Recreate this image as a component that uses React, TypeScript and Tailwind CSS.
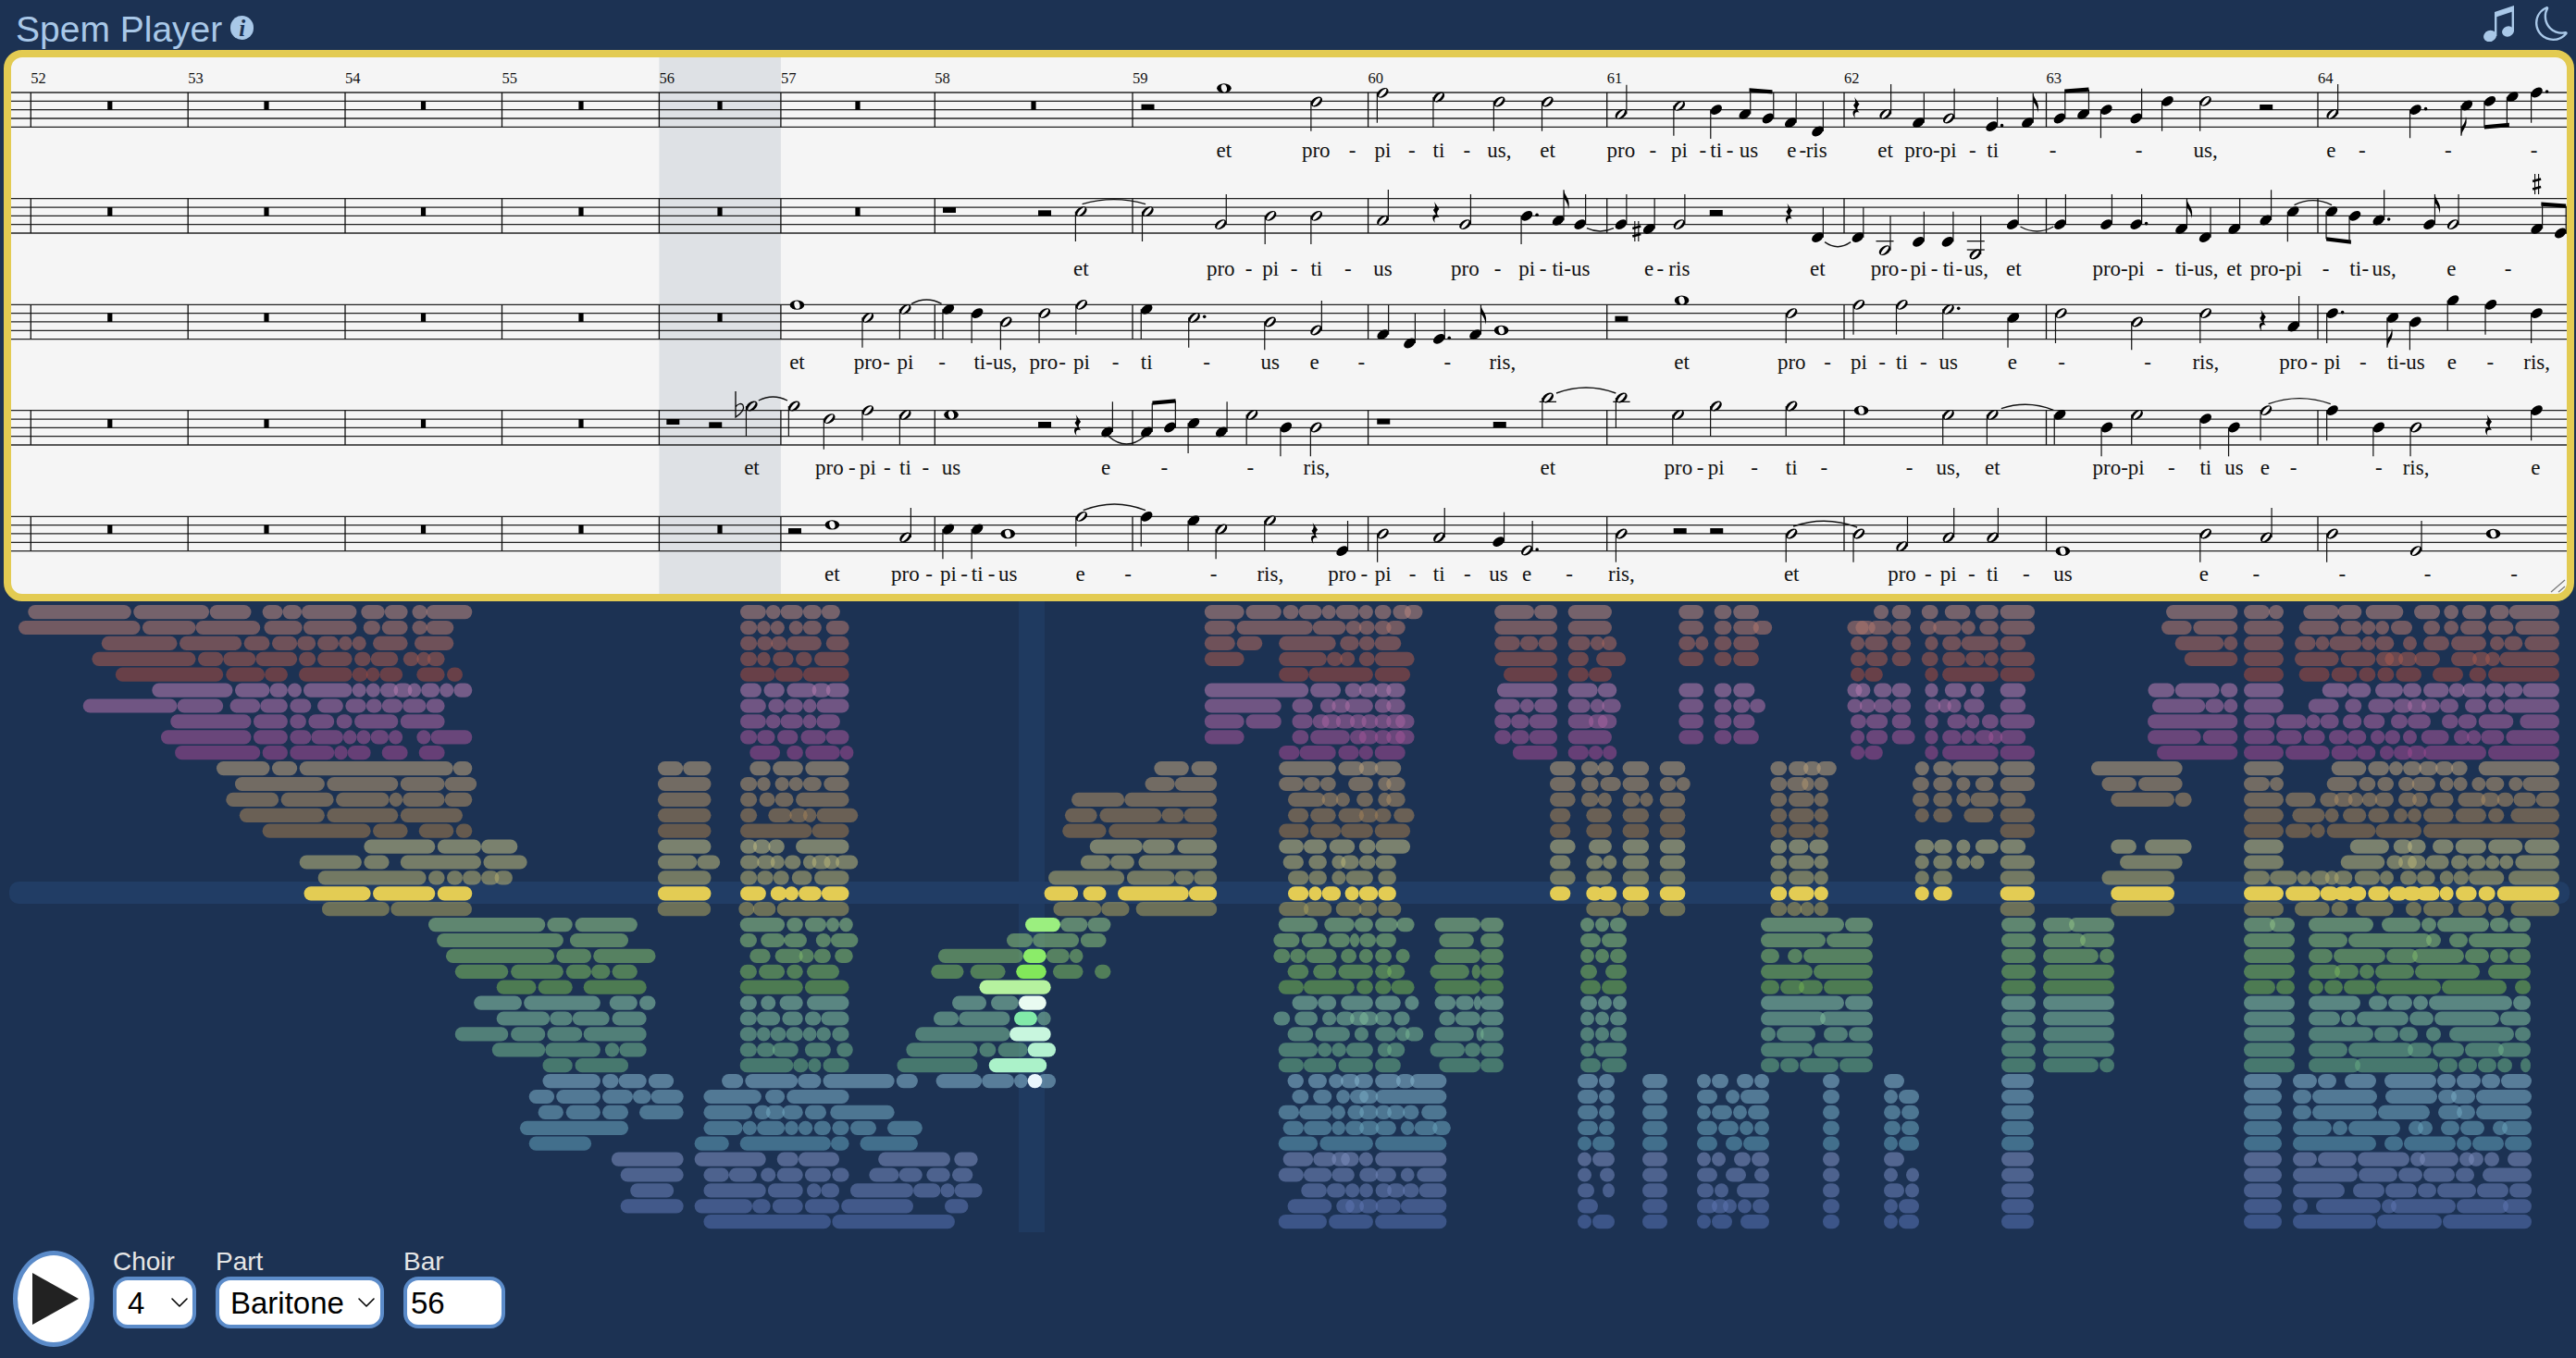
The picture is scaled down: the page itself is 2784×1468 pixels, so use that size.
import { BsMoon } from "react-icons/bs";
import { ChevronDown } from "lucide-react";

type View = { ox: number; oy: number; sx: number };
type Note = [number, number, string, number?];

// zoom-space helpers: the score was measured in a few stretched views
const top1: View = { ox: 900, oy: 50, sx: 1.6505 };
const top2: View = { ox: 1850, oy: 0, sx: 1.679 };
const low1: View = { ox: 840, oy: 315, sx: 1.633 };
const low2: View = { ox: 1800, oy: 315, sx: 1.593 };

const px = (v: View, x: number) => v.ox + x / v.sx;
const py = (v: View, y: number) => v.oy + y / 3;

const staffTops = [100, 214.7, 329.3, 443.7, 558.3];
const lineGap = 9.33;
const bars = [33.3, 203.2, 373, 542.5, 712.4, 843.9, 1010.3, 1224, 1478.6, 1736.7, 1993, 2211.5, 2505];
const barRests = [
  [118.8, 288, 457.5, 628, 778, 927, 1117],
  [118.8, 288, 457.5, 628, 778, 927],
  [118.8, 288, 457.5, 628, 778],
  [118.8, 288, 457.5, 628],
  [118.8, 288, 457.5, 628, 778],
];

const noteSets: { v: View; notes: Note[] }[] = [
  {
    v: top1,
    notes: [
      [698, 136, "w"], [863, 180, "h", 275], [981, 151, "h", 248], [1081, 165, "h", 262], [1189, 180, "h", 275], [1275, 180, "h", 275],
      [1406, 220, "h", 125], [1510, 193, "h", 290],
      [443, 536, "h", 633], [562, 536, "h", 633], [692, 578, "h", 480], [781, 550, "h", 642], [863, 550, "h", 642],
      [981, 565, "h", 465], [1128, 578, "h", 480], [1238, 550, "q.", 642], [1294, 565, "qf", 466], [1333, 578, "q", 480],
      [1406, 578, "q", 480], [1456, 592, "q", 494], [1510, 578, "h", 480],
    ],
  },
  {
    v: top2,
    notes: [
      [8, 356, "q", 450], [60, 370, "q", 295], [102, 384, "q", 300], [143, 398, "q", 302], [192, 426, "q", 330],
      [315, 370, "h", 273], [375, 398, "q", 302], [430, 384, "h", 287], [508, 410, "q.", 315], [573, 398, "qf", 302],
      [631, 384, "q", 297], [674, 370, "q", 290], [716, 356, "q", 448], [770, 384, "q", 287], [827, 328, "q", 425], [896, 328, "h", 425],
      [1126, 370, "h", 273], [1277, 356, "q.", 448], [1370, 342, "qf", 440], [1412, 328, "q", 415], [1453, 314, "q", 405], [1497, 300, "q.", 398],
      [192, 770, "q", 672], [265, 770, "q", 672], [314, 812, "h", 700], [375, 784, "q", 686], [428, 784, "q", 686], [478, 825, "h", 700],
      [546, 728, "q", 630], [632, 728, "q", 630], [716, 728, "q", 630], [770, 728, "q.", 630], [852, 742, "qf", 645], [895, 770, "q", 672],
      [948, 742, "q", 644], [1005, 714, "q", 616], [1055, 686, "q", 784], [1125, 686, "q", 775], [1167, 700, "q", 785],
      [1210, 714, "q.", 616], [1302, 728, "qf", 630], [1345, 728, "h", 630], [1497, 742, "q", 662], [1540, 756, "q", 668],
    ],
  },
  {
    v: low1,
    notes: [
      [35, 44, "w"], [160, 85, "h", 182], [226, 58, "h", 155], [302, 58, "q", 155], [353, 71, "q", 168], [404, 99, "h", 190], [472, 71, "h", 168], [537, 43, "h", 140],
      [652, 58, "q", 155], [736, 85, "h.", 182], [870, 99, "h", 190], [951, 126, "h", 30], [1069, 140, "q", 44], [1116, 168, "q", 71], [1168, 154, "q.", 57],
      [1232, 140, "qf", 44], [1278, 126, "w"],
      [-45, 372, "h", 470], [30, 372, "h", 470], [92, 413, "h", 512], [160, 386, "h", 484], [226, 400, "h", 497], [307, 400, "w"],
      [582, 456, "q", 358], [652, 456, "q", 362], [693, 441, "q", 355], [735, 427, "q", 525], [784, 456, "q", 358], [838, 400, "h", 497], [898, 441, "q", 535],
      [951, 441, "h", 535], [1360, 345, "h", 442], [1490, 345, "h", 442],
      [97, 757, "w"], [226, 798, "h", 702], [302, 771, "q", 868], [353, 771, "q", 868], [407, 786, "w"], [537, 730, "h", 827], [652, 730, "q", 827],
      [735, 743, "q", 840], [784, 771, "h", 868], [870, 743, "h", 840], [997, 842, "q", 744], [1069, 786, "h", 878], [1168, 798, "h", 702],
      [1273, 812, "q", 716], [1323, 840, "h.", 744], [1490, 786, "h", 878],
    ],
  },
  {
    v: low2,
    notes: [
      [28, 29, "w"], [217, 71, "h", 168], [333, 43, "h", 140], [407, 43, "h", 140], [487, 58, "h.", 155], [599, 85, "q", 182], [681, 71, "h", 168],
      [812, 99, "h", 190], [930, 71, "h", 168], [1081, 114, "q", 15], [1148, 71, "q.", 168], [1252, 85, "qf", 182], [1291, 99, "q", 190],
      [1356, 29, "q", 127], [1421, 43, "q", 140], [1500, 71, "q", 168],
      [22, 400, "h", 497], [87, 372, "h", 470], [217, 372, "h", 470], [337, 386, "w"], [487, 400, "h", 497], [563, 400, "h", 497], [679, 400, "q", 497],
      [760, 441, "q", 535], [812, 400, "h", 497], [930, 413, "q", 512], [979, 441, "q", 535], [1034, 386, "h", 484], [1148, 386, "q", 484],
      [1228, 441, "q", 535], [1292, 441, "h", 535], [1500, 386, "q", 484],
      [217, 786, "h", 878], [333, 786, "h", 878], [407, 827, "h", 730], [487, 798, "h", 702], [563, 798, "h", 702], [684, 842, "w"], [930, 786, "h", 878],
      [1034, 798, "h", 702], [1148, 786, "h", 878], [1292, 842, "h", 744], [1425, 786, "w"],
    ],
  },
];

// x, y of small block rests
const blockRests: { v: View; at: number[][] }[] = [
  { v: top1, at: [[562, 197], [208, 531], [378, 541]] },
  { v: top2, at: [[8, 690], [1006, 348]] },
  { v: low1, at: [[1490, 89], [-184, 423], [-109, 433], [472, 432], [1070, 422], [1275, 432], [31, 777]] },
  { v: low2, at: [[25, 777], [88, 777]] },
];
const quarterRests: [View, number, number][] = [
  [top1, 1076, 540], [top2, 262, 350], [top2, 140, 695], [low1, 530, 435], [low1, 948, 785], [low2, 1028, 95], [low2, 1417, 435],
];
const beams: [View, number, number, number, number][] = [
  [top2, 68, 292, 110, 298], [top2, 640, 296, 684, 290], [top2, 1402, 412, 1447, 405], [top2, 1115, 775, 1160, 785],
  [top2, 1505, 662, 1550, 668], [low1, 662, 362, 703, 355],
];
const ties: [View, number, number, number, number, number][] = [
  [top1, 445, 512, 558, 512, 497], [top1, 1345, 590, 1393, 590, 600],
  [top2, 205, 785, 252, 785, 800], [top2, 560, 735, 620, 735, 750], [top2, 1057, 665, 1125, 665, 650],
  [low1, 237, 40, 290, 40, 27], [low1, -33, 354, 18, 354, 342], [low1, 585, 470, 648, 470, 495], [low1, 1375, 330, 1480, 330, 312],
  [low2, 220, 762, 330, 765, 745], [low2, 578, 380, 668, 385, 367], [low2, 1038, 365, 1145, 365, 347], [low1, 540, 710, 650, 710, 690],
];
const ledgers: [View, number, number, number][] = [
  [top2, 298, 330, 782], [top2, 463, 495, 782], [top2, 463, 495, 810], [low1, 1345, 1375, 358], [low1, 1475, 1505, 358],
];

const lyrics: { v: View; base: number; words: [number, string][] }[] = [
  { v: top1, base: 170, words: [[698, "et"], [862, "pro"], [927, "-"], [981, "pi"], [1033, "-"], [1081, "ti"], [1131, "-"], [1189, "us,"], [1275, "et"], [1406, "pro"], [1463, "-"], [1510, "pi"], [1552, "-"]] },
  { v: top2, base: 170, words: [[8, "ti"], [33, "-"], [67, "us"], [145, "e"], [165, "-"], [190, "ris"], [315, "et"], [397, "pro-pi"], [473, "-"], [510, "ti"], [619, "-"], [775, "-"], [896, "us,"], [1124, "e"], [1180, "-"], [1336, "-"], [1492, "-"]] },
  { v: top1, base: 298, words: [[443, "et"], [692, "pro"], [742, "-"], [781, "pi"], [823, "-"], [863, "ti"], [919, "-"], [981, "us"], [1128, "pro"], [1186, "-"], [1238, "pi"], [1267, "-"], [1317, "ti-us"], [1456, "e"], [1476, "-"], [1510, "ris"]] },
  { v: top2, base: 298, words: [[192, "et"], [314, "pro"], [349, "-"], [375, "pi"], [404, "-"], [430, "ti"], [449, "-"], [480, "us,"], [548, "et"], [738, "pro-pi"], [813, "-"], [880, "ti-us,"], [948, "et"], [1024, "pro-pi"], [1114, "-"], [1168, "ti"], [1186, "-"], [1220, "us,"], [1342, "e"], [1445, "-"]] },
  { v: low1, base: 399, words: [[35, "et"], [160, "pro"], [193, "-"], [226, "pi"], [291, "-"], [385, "ti-us,"], [470, "pro"], [503, "-"], [537, "pi"], [597, "-"], [652, "ti"], [758, "-"], [870, "us"], [948, "e"], [1031, "-"], [1183, "-"], [1280, "ris,"]] },
  { v: low2, base: 399, words: [[28, "et"], [217, "pro"], [279, "-"], [333, "pi"], [373, "-"], [407, "ti"], [444, "-"], [487, "us"], [597, "e"], [682, "-"], [830, "-"], [930, "ris,"], [1081, "pro"], [1117, "-"], [1148, "pi"], [1201, "-"], [1275, "ti-us"], [1354, "e"], [1420, "-"], [1500, "ris,"]] },
  { v: low1, base: 513, words: [[-45, "et"], [92, "pro"], [132, "-"], [160, "pi"], [194, "-"], [226, "ti"], [262, "-"], [307, "us"], [580, "e"], [683, "-"], [835, "-"], [952, "ris,"], [1360, "et"]] },
  { v: low2, base: 513, words: [[22, "pro"], [60, "-"], [87, "pi"], [153, "-"], [217, "ti"], [273, "-"], [420, "-"], [487, "us,"], [563, "et"], [780, "pro-pi"], [871, "-"], [930, "ti"], [979, "us"], [1032, "e"], [1081, "-"], [1228, "-"], [1292, "ris,"], [1498, "e"]] },
  { v: low1, base: 628, words: [[97, "et"], [226, "pro"], [268, "-"], [302, "pi"], [330, "-"], [353, "ti"], [378, "-"], [407, "us"], [535, "e"], [619, "-"], [770, "-"], [870, "ris,"], [997, "pro"], [1036, "-"], [1069, "pi"], [1121, "-"], [1168, "ti"], [1218, "-"], [1273, "us"], [1323, "e"], [1398, "-"], [1490, "ris,"]] },
  { v: low2, base: 628, words: [[217, "et"], [407, "pro"], [452, "-"], [487, "pi"], [527, "-"], [563, "ti"], [621, "-"], [684, "us"], [927, "e"], [1017, "-"], [1165, "-"], [1312, "-"], [1461, "-"]] },
];

// piano roll, rows are "start-end start-end" in the zoom space of each block
const rollBlocks: { v: View; keep: (x: number) => boolean; rows: Record<number, string> }[] = [
  {
    v: { ox: 0, oy: 0, sx: 1.65 },
    keep: () => true,
    rows: {
      0: "50-234 238-373 374-448 468-504 504-538 538-636 644-686 686-727 735-762 760-842 1320-1366 1366-1392 1392-1432 1432-1465 1465-1498",
      1: "33-250 254-349 349-464 471-539 541-636 648-678 681-727 735-762 760-809 1320-1350 1350-1374 1374-1399 1407-1432 1432-1465 1473-1514",
      2: "181-316 320-431 435-481 485-530 530-563 566-604 604-628 628-653 665-727 739-809 1320-1350 1350-1378 1375-1403 1403-1465 1473-1514",
      3: "164-349 353-398 398-456 456-530 533-563 566-628 632-661 661-710 719-747 743-768 762-793 1320-1350 1350-1374 1378-1415 1419-1448 1452-1514",
      4: "206-398 403-472 472-513 533-628 628-656 653-677 677-718 743-793 797-825 1320-1382 1382-1432 1432-1514",
      5: "271-415 419-481 481-513 513-538 541-628 628-653 653-678 678-710 702-735 727-751 751-784 784-809 809-842 1320-1358 1362-1399 1403-1456 1448-1481 1473-1514",
      6: "148-316 316-398 410-464 464-513 517-555 566-612 616-653 653-681 681-718 718-760 760-793 1320-1366 1370-1399 1399-1432 1432-1456 1456-1514",
      7: "304-448 452-513 517-546 550-596 600-628 632-710 714-793 1320-1366 1366-1392 1392-1432 1432-1456 1456-1498",
      8: "287-448 452-513 517-555 555-612 612-636 636-661 661-693 693-718 743-768 768-842 1320-1350 1350-1382 1386-1423 1428-1473 1473-1514",
      9: "312-464 468-513 517-596 596-620 620-661 681-727 747-793 1337-1391 1403-1432 1436-1498 1498-1522",
      10: "386-481 485-530 534-808 808-842 1173-1218 1218-1268 1337-1374 1378-1432 1436-1514",
      11: "419-579 583-710 714-793 793-850 1173-1268 1320-1350 1350-1374 1382-1407 1407-1432 1432-1465 1469-1514",
      12: "403-497 501-595 599-694 694-718 718-793 793-842 1173-1268 1320-1350 1354-1382 1382-1415 1419-1514",
      13: "427-579 583-710 714-825 1173-1268 1320-1350 1370-1412 1408-1440 1432-1456 1456-1530",
      14: "468-661 665-727 747-809 813-842 1173-1268 1320-1448 1448-1514",
      15: "649-776 780-858 858-923 1173-1268 1320-1350 1343-1374 1370-1399 1419-1514",
      16: "534-645 649-694 714-858 862-940 1173-1243 1243-1284 1320-1354 1350-1382 1374-1399 1399-1428 1432-1456 1448-1481 1469-1497 1490-1530",
      17: "567-760 764-793 797-825 825-858 858-890 882-914 1173-1268 1320-1350 1350-1379 1379-1407 1412-1448 1452-1514",
      18: "542-661 665-776 780-842 1173-1268 1320-1366 1374-1403 1399-1424 1424-1465 1465-1514",
    },
  },
  {
    v: { ox: 950, oy: 0, sx: 1.12 },
    keep: () => true,
    rows: {
      0: "394-442 444-487 489-508 508-536 536-553 553-581 581-598 600-620 622-644 636-658 745-793 793-821 834-887 968-998 1011-1032 1034-1065 1204-1222 1226-1249 1262-1282 1290-1321 1327-1355 1357-1399",
      1: "394-431 433-525 525-565 565-584 581-600 600-620 614-637 745-821 834-887 968-998 1011-1032 1034-1065 1058-1081 1172-1198 1182-1206 1198-1226 1226-1249 1260-1280 1276-1310 1310-1327 1332-1355 1357-1399",
      2: "394-431 433-464 484-553 558-581 581-600 600-632 745-776 776-798 798-821 834-861 861-878 875-893 968-988 988-1004 1011-1032 1034-1065 1176-1193 1193-1221 1226-1249 1266-1282 1287-1310 1310-1355 1357-1388",
      3: "394-442 484-542 542-561 558-576 581-600 600-648 745-821 834-859 868-904 968-998 1011-1032 1034-1065 1176-1195 1195-1221 1226-1249 1262-1282 1287-1315 1315-1338 1338-1355 1357-1399",
      4: "484-520 520-598 600-643 756-821 834-859 859-887 1176-1193 1193-1215 1266-1282 1287-1355 1357-1399",
      5: "394-520 522-559 564-584 581-603 600-620 614-637 748-821 834-870 870-893 968-998 1011-1032 1034-1060 1172-1190 1182-1200 1204-1226 1226-1249 1266-1282 1290-1316 1321-1338 1357-1388 1536-1568",
      6: "394-487 500-525 534-553 548-570 564-598 600-620 614-637 745-776 776-793 793-821 834-861 861-878 875-898 968-998 1011-1032 1034-1054 1054-1073 1172-1190 1187-1206 1204-1226 1226-1249 1266-1285 1282-1298 1293-1310 1313-1338 1357-1388",
      7: "394-442 444-487 500-525 525-545 536-559 553-576 570-590 584-604 600-620 614-637 625-648 745-765 765-787 787-821 834-865 859-882 870-893 968-998 1011-1032 1034-1060 1176-1195 1195-1221 1226-1249 1266-1282 1293-1316 1316-1332 1335-1355 1357-1399",
      8: "394-442 500-520 522-570 570-590 581-604 600-620 614-637 625-648 745-765 765-787 787-821 834-887 968-998 1011-1032 1034-1065 1176-1193 1195-1221 1226-1254 1266-1282 1287-1310 1310-1327 1327-1349 1343-1360 1357-1388",
      9: "484-509 509-553 556-581 581-598 600-637 767-821 834-859 859-876 876-893 1176-1193 1193-1215 1266-1282 1287-1355 1357-1399",
      10: "333-375 378-409 484-553 556-587 581-604 600-632 812-843 850-871 870-889 900-932 945-976 1079-1099 1101-1125 1119-1140 1135-1159 1254-1271 1276-1299 1299-1355 1357-1399",
      11: "322-358 358-409 484-514 514-534 534-553 568-598 604-620 614-637 812-843 850-871 873-898 900-932 945-965 965-982 1079-1099 1099-1125 1117-1132 1132-1149 1251-1271 1276-1299 1304-1321 1327-1349 1357-1399 1480-1522",
      12: "233-297 297-409 495-540 536-556 553-570 578-598 604-620 614-637 812-843 850-871 870-887 900-921 921-937 945-976 1079-1099 1101-1132 1132-1149 1251-1271 1276-1299 1304-1321 1321-1355 1357-1388 1491-1568",
      13: "225-264 267-342 342-369 369-409 495-520 522-553 556-587 581-604 600-620 623-648 812-837 856-887 900-932 945-976 1079-1099 1101-1132 1132-1149 1254-1271 1276-1299 1313-1349 1357-1399",
      14: "222-275 278-409 484-520 522-559 559-598 600-643 812-837 856-887 900-932 945-976 1079-1099 1101-1132 1132-1149 1357-1399",
      15: "255-319 319-358 361-409 484-514 514-542 545-576 581-601 601-643 812-843 859-887 900-932 945-976 1079-1099 1101-1125 1126-1149 1254-1277 1277-1299 1304-1321 1327-1355 1357-1388 1491-1522",
      16: "244-280 280-309 314-409 489-514 520-542 548-565 559-581 581-601 601-626 812-837 856-876 876-893 900-932 945-976 1079-1099 1101-1132 1132-1149 1254-1271 1276-1299 1304-1321 1321-1338 1357-1399",
      17: "205-297 300-358 358-381 381-409 495-520 520-542 548-565 565-598 604-626 812-843 856-887 900-932 945-976 1079-1099 1101-1132 1132-1149 1254-1271 1276-1299 1357-1399 1480-1568",
      18: "200-241 247-275 289-375 375-409 495-520 520-536 536-559 564-581 581-604 604-626 812-837 856-876 870-893 900-932 945-976 1079-1099 1101-1132 1132-1149 1254-1271 1276-1299 1357-1399 1491-1568",
      19: "211-269 269-303 311-409 484-520 514-548 553-584 581-603 604-632 856-898 900-932 945-976 1079-1099 1099-1117 1115-1132 1132-1149 1357-1399 1491-1568",
    },
  },
  {
    v: { ox: 2350, oy: 0, sx: 3 },
    keep: () => true,
    rows: {
      0: "-27-205 225-309 306-354 418-533 530-607 620-742 777-861 874-921 933-1011 1023-1085 1085-1248",
      1: "-42-56 61-205 225-354 404-533 539-607 607-652 652-696 702-771 807-861 874-921 927-1011 1017-1099 1105-1248",
      2: "2-160 160-205 225-354 390-458 458-502 502-607 607-652 652-712 741-786 807-891 897-1011 1023-1069 1069-1129 1135-1248",
      3: "32-205 225-354 390-533 539-652 654-712 682-742 726-786 778-861 897-981 966-1023 1008-1056 1054-1248",
      4: "225-354 404-503 509-592 598-652 658-712 718-801 837-936 956-1011 1017-1248",
      5: "2-146 150-205 225-354 479-562 562-637 651-741 741-801 807-890 890-941 934-1010 1010-1069 1069-1129 1129-1248",
      6: "-72-100 100-160 160-205 225-354 434-533 553-607 628-711 711-771 756-816 801-861 861-921 942-1011 1017-1069 1069-1248",
      7: "-87-205 225-325 330-428 428-473 473-533 546-607 613-682 702-756 756-831 867-920 920-980 986-1099 1120-1248",
      8: "-87-86 92-205 225-325 330-413 419-488 501-562 562-622 636-682 682-732 741-786 800-890 906-956 948-994 994-1069 1075-1248",
      9: "-57-205 225-354 360-503 509-592 592-652 666-711 711-771 756-816 808-1011 1017-1248",
      10: "-270-26 225-354 509-622 628-696 696-741 741-801 793-854 846-904 897-950 986-1248",
      11: "-117-26 225-309 309-354 494-592 598-652 658-711 726-778 770-846 860-905 905-950 964-1009 1009-1069 1084-1129 1129-1248",
      12: "2-56 225-354 360-458 472-533 518-578 563-612 608-658 650-711 726-786 771-821 829-905 919-1009 994-1054 1046-1099 1099-1172 1172-1248",
      13: "225-354 382-488 488-533 546-622 628-696 711-756 756-801 807-905 911-1011 1017-1069 1090-1248",
      14: "225-354 360-443 443-488 494-652 652-801 807-1248",
      15: "-96-56 225-354 569-696 710-771 756-815 837-905 911-1011 1017-1129 1135-1248",
      16: "-177-26 225-354 539-682 688-741 726-786 756-815 815-890 897-950 950-1009 1009-1054 1054-1099 1105-1248",
      17: "225-309 309-398 398-443 443-503 488-533 518-577 584-666 666-711 732-786 786-845 860-905 905-954 954-1069 1083-1248",
      18: "225-354 360-473 473-533 518-577 563-622 628-696 696-756 741-801 786-860 860-905 912-980 986-1040 1046-1248",
      19: "225-354 390-503 509-562 588-710 750-801 807-905 920-1011 1017-1069 1090-1248",
    },
  },
  {
    v: { ox: 0, oy: 0, sx: 1.4255 },
    keep: (x) => x < 1000,
    rows: {
      19: "496-600 602-727 1013-1095 1138-1162 1160-1195 1197-1308",
      20: "660-840 843-882 886-982 1140-1209 1212-1237 1240-1273 1273-1293 1293-1314",
      21: "673-868 878-968 1140-1166 1172-1209 1208-1243 1257-1280 1280-1322",
      22: "687-854 857-911 914-1010 1155-1187 1194-1237 1231-1254 1254-1280 1286-1314",
      23: "701-783 787-868 872-911 911-940 943-982 1140-1166 1169-1209 1212-1237 1243-1293",
      24: "765-826 829-882 899-996 1140-1237 1240-1308",
      25: "730-804 807-925 939-982 985-1010 1140-1166 1172-1195 1201-1237 1243-1308",
      26: "765-847 847-882 882-939 943-996 1140-1166 1166-1202 1205-1237 1240-1265 1265-1308",
      27: "701-783 787-840 843-897 899-996 1140-1166 1166-1187 1187-1211 1211-1237 1237-1258 1258-1280 1282-1308 1410-1556",
      28: "758-840 840-925 932-954 954-996 1140-1166 1166-1194 1190-1230 1240-1280 1289-1314 1396-1506",
      29: "836-882 886-968 1140-1222 1222-1245 1245-1265 1268-1308 1382-1506",
      30: "836-925 928-953 953-996 999-1038 1112-1145 1148-1229 1229-1265 1268-1378 1381-1414",
      31: "815-854 857-925 928-975 975-1003 1003-1053 1084-1173 1179-1209 1212-1308",
      32: "829-868 872-925 928-968 985-1053 1084-1159 1162-1187 1180-1209 1205-1237 1240-1273 1279-1378",
      33: "801-968 1084-1144 1144-1166 1166-1209 1209-1230 1230-1252 1254-1280 1282-1308 1310-1350 1367-1421",
      34: "815-911 1070-1123 1140-1280 1280-1308 1325-1414",
      35: "942-1053 1070-1180 1197-1230 1230-1293 1353-1464",
      36: "956-1053 1084-1123 1123-1166 1172-1195 1197-1237 1240-1280 1282-1308 1339-1385 1385-1421",
      37: "971-1038 1084-1180 1183-1237 1243-1265 1265-1293 1310-1407 1407-1449",
      38: "956-1053 1070-1159 1159-1187 1190-1237 1240-1293 1296-1407",
      39: "1084-1280 1282-1471",
    },
  },
  {
    v: { ox: 900, oy: 0, sx: 2.24 },
    keep: (x) => x >= 1000,
    rows: {
      20: "551-617 617-673 1079-1174 1190-1263 1263-1308 1313-1368 1365-1408 1457-1568",
      21: "421-484 484-596 600-662 1067-1130 1135-1196 1201-1252 1252-1275 1275-1315 1315-1364 1468-1552",
      22: "255-461 517-573 573-606 1067-1107 1107-1145 1146-1220 1230-1268 1274-1308 1313-1353 1363-1397 1457-1568",
      23: "238-317 333-418 533-606 634-673 1101-1152 1163-1219 1224-1308 1313-1353 1342-1385 1446-1541 1547-1568",
      24: "222-339 1079-1140 1140-1263 1268-1308 1313-1352 1352-1408 1457-1568",
      25: "289-372 383-450 1112-1174 1174-1219 1230-1308 1313-1375 1385-1419 1457-1508 1508-1552 1552-1568",
      26: "244-305 305-429 495-528 1067-1107 1118-1174 1185-1219 1219-1263 1252-1297 1275-1320 1313-1353 1358-1397 1468-1507 1507-1568",
      27: "1101-1163 1168-1252 1263-1297 1313-1364 1364-1397 1386-1430 1457-1552 1558-1568",
      28: "355-395 400-472 1079-1174 1174-1208 1208-1243 1243-1308 1319-1353 1342-1385 1446-1530 1530-1568",
      29: "1079-1140 1140-1219 1224-1308 1313-1375 1468-1568",
      30: "216-250 250-361 361-439 439-472 495-540 1101-1140 1151-1196 1201-1236 1230-1275 1263-1308 1313-1375 1364-1408 1398-1486",
      31: "1112-1152 1163-1208 1219-1252 1252-1297 1275-1320 1314-1486",
      32: "1079-1129 1129-1208 1208-1241 1246-1286 1275-1320 1314-1353 1342-1385 1380-1419 1425-1486",
      33: "1090-1140 1140-1208 1208-1241 1241-1286 1275-1322 1314-1364 1375-1408 1408-1464 1452-1496",
      34: "1079-1174 1179-1308 1313-1486",
      35: "294-351 1090-1163 1163-1219 1208-1252 1230-1274 1274-1308 1313-1486",
      36: "227-284 289-339 1079-1140 1140-1208 1208-1263 1275-1320 1314-1364 1375-1408 1414-1486",
      37: "261-295 295-362 1134-1196 1196-1241 1241-1275 1275-1308 1314-1353 1342-1385 1380-1419 1419-1486",
      38: "222-261 271-328 1101-1208 1219-1263 1241-1286 1275-1320 1314-1375 1375-1486",
      39: "1079-1196 1201-1308 1313-1486",
    },
  },
];

// notes that are sounding right now
const lit: [number, number, number, string][] = [
  [20, 466, 551, "#9bef7f"], [22, 461, 517, "#8bec69"], [23, 444, 517, "#82e75a"], [24, 355, 528, "#b6f29f"], [25, 450, 517, "#e9fbf1"],
  [26, 439, 495, "#82eaa9"], [27, 428, 528, "#c8f6de"], [28, 472, 540, "#b3f1d0"], [29, 378, 518, "#abf2c9"], [30, 472, 507, "#eaf6fc"],
];

// dense passages at the far right, cut into pills per row
const narrow = [15, 18, 22];
const middle = [16, 20, 26, 34, 42, 56, 70, 90];
const wide = [34, 46, 60, 80];
const denseRuns: [number, number, number, number, number[]][] = [
  [20, 29, 1600, 1625, wide], [20, 29, 1708, 1758, narrow], [20, 29, 1903, 2024, middle], [20, 29, 2163, 2200, wide], [20, 29, 2208, 2285, wide],
  [20, 29, 2425, 2480, wide], [20, 29, 2495, 2735, middle],
  [30, 39, 1705, 1745, narrow], [30, 39, 1775, 1802, wide], [30, 39, 1834, 1912, narrow], [30, 39, 1970, 1988, wide], [30, 39, 2036, 2074, narrow],
  [30, 39, 2163, 2198, wide], [30, 39, 2425, 2466, wide], [30, 39, 2478, 2736, middle],
];

const groupColors: [number[], number[]][] = [
  [[0x75, 0x62, 0x6b], [0x68, 0x40, 0x48]],
  [[0x74, 0x5c, 0x88], [0x66, 0x3f, 0x76]],
  [[0x76, 0x71, 0x6a], [0x66, 0x5a, 0x4e]],
  [[0x7a, 0x81, 0x6e], [0x6c, 0x70, 0x58]],
  [[0x5f, 0x86, 0x70], [0x4d, 0x7b, 0x52]],
  [[0x5a, 0x86, 0x82], [0x47, 0x78, 0x6e]],
  [[0x58, 0x7d, 0x99], [0x42, 0x6f, 0x8c]],
  [[0x53, 0x66, 0x90], [0x3c, 0x55, 0x88]],
];
const pageBg = [0x1c, 0x32, 0x53];
const pillAlpha = 0.6;

function rowFill(row: number) {
  const [a, b] = groupColors[Math.floor(row / 5)];
  const t = (row % 5) / 4;
  const rgb = a.map((c, i) => {
    const shown = c + (b[i] - c) * t;
    return Math.min(255, Math.round((shown - (1 - pillAlpha) * pageBg[i]) / pillAlpha));
  });
  return `rgb(${rgb.join(",")})`;
}

const rowY = (row: number) => 654 + row * 16.9;

function buildPills() {
  const pills: { row: number; x0: number; x1: number }[] = [];
  for (const block of rollBlocks) {
    for (const [row, text] of Object.entries(block.rows)) {
      for (const part of text.split(" ")) {
        const m = part.match(/^(-?\d+)-(\d+)$/);
        if (!m) continue;
        const x0 = px(block.v, Number(m[1]));
        const x1 = px(block.v, Number(m[2]));
        if (block.keep(x0)) pills.push({ row: Number(row), x0, x1 });
      }
    }
  }
  let seed = 7;
  const rand = () => {
    seed = (seed * 1103515 + 12345) % 2147483648;
    return seed / 2147483648;
  };
  for (const [from, to, x0, x1, widths] of denseRuns) {
    for (let row = from; row <= to; row++) {
      let x = x0;
      while (x < x1 - 10) {
        const pick = widths[Math.floor(rand() * widths.length)];
        const end = x1 - x - pick < 14 ? x1 : x + pick;
        pills.push({ row, x0: x, x1: end });
        const r = rand();
        x = end + (r < 0.12 ? -6 : r < 0.8 ? 1 : 9);
      }
    }
  }
  return pills;
}

const pills = buildPills();

function PianoRoll() {
  return (
    <svg viewBox="0 650 2784 690" className="block w-[2784px] h-[690px]">
      <rect x="1101" y="650" width="28" height="682" fill="#1f3a60" />
      <rect x="10" y="953" width="2767" height="24" rx="10" fill="#213d65" />
      {pills.map((p, i) => (
        <rect
          key={i}
          x={p.x0}
          y={rowY(p.row)}
          width={Math.max(p.x1 - p.x0, 8)}
          height={15.2}
          rx={7.6}
          fill={p.row === 18 ? "#e3cc54" : rowFill(p.row)}
          fillOpacity={p.row === 18 ? 1 : pillAlpha}
        />
      ))}
      {lit.map(([row, a, b, color]) => (
        <rect key={row} x={900 + a / 2.24} y={rowY(row)} width={(b - a) / 2.24} height={15.2} rx={7.6} fill={color} />
      ))}
    </svg>
  );
}

function NoteGlyph({ v, note }: { v: View; note: Note }) {
  const [rx, ry, type, stem] = note;
  const x = px(v, rx);
  const y = py(v, ry);
  const paper = x > 712 && x < 844 ? "#dee1e5" : "#f5f5f5";
  const up = stem !== undefined && stem < ry;
  const sx = up ? x + 6 : x - 6;
  const sy = stem !== undefined ? py(v, stem) : y;
  const hollow = type[0] === "h";
  return (
    <g>
      {stem !== undefined && <line x1={sx} y1={y} x2={sx} y2={sy} stroke="#111" strokeWidth="1.2" />}
      {type[0] === "w" ? (
        <g transform={`translate(${x} ${y})`}>
          <ellipse rx="7.8" ry="5.2" fill="#000" />
          <ellipse rx="3" ry="4.2" fill={paper} transform="rotate(-15)" />
        </g>
      ) : (
        <g transform={`translate(${x} ${y}) rotate(-35)`}>
          <ellipse rx="6.9" ry="4.5" fill="#000" />
          {hollow && <ellipse rx="5.6" ry="2" fill={paper} transform="rotate(-12)" />}
        </g>
      )}
      {type[1] === "." && <circle cx={x + 11} cy={y - 1} r="1.8" fill="#000" />}
      {type[1] === "f" &&
        (up ? (
          <path d={`M${sx} ${sy} c1 7 8 10 5 21 c0 -7 -4 -10 -5 -12 z`} fill="#000" />
        ) : (
          <path d={`M${sx} ${sy} c1 -7 8 -10 5 -21 c0 7 -4 10 -5 12 z`} fill="#000" />
        ))}
    </g>
  );
}

function Score() {
  return (
    <svg viewBox="12 62 2762 580" className="block w-[2762px] h-[580px]">
      <rect x="712.4" y="62" width="131.5" height="580" fill="#dee1e5" />
      {staffTops.map((top, s) => (
        <g key={s}>
          {[0, 1, 2, 3, 4].map((l) => (
            <line key={l} x1="12" x2="2774" y1={top + l * lineGap} y2={top + l * lineGap} stroke="#222" strokeWidth="1.3" />
          ))}
          {bars.map((b) => (
            <line key={b} x1={b} x2={b} y1={top} y2={top + 4 * lineGap} stroke="#111" strokeWidth="1.3" />
          ))}
          {barRests[s].map((x) => (
            <rect key={x} x={x - 2.6} y={top + lineGap} width="5.2" height={lineGap} fill="#000" />
          ))}
        </g>
      ))}
      {bars.map((b, i) => (
        <text key={b} x={b} y="89.5" fontSize="16.5" fill="#111" fontFamily="'Liberation Serif', serif">
          {52 + i}
        </text>
      ))}
      {blockRests.map(({ v, at }) =>
        at.map(([x, y]) => <rect key={`${v.ox}-${x}-${y}`} x={px(v, x) - 7} y={py(v, y) - 3} width="14" height="6" fill="#000" />),
      )}
      {quarterRests.map(([v, x, y]) => (
        <path
          key={`${v.ox}-${x}-${y}`}
          transform={`translate(${px(v, x)} ${py(v, y)})`}
          d="M-2 -12 L3.5 -4 C1 -1 0 1 3.5 5 C0 4 -3 5 -1 11 C-4.5 7 -4.5 2 0 2 L-3 -3 C-1 -5 0 -7 -2 -12Z"
          fill="#000"
        />
      ))}
      {ledgers.map(([v, a, b, y]) => (
        <line key={`${v.ox}-${a}-${y}`} x1={px(v, a)} x2={px(v, b)} y1={py(v, y)} y2={py(v, y)} stroke="#111" strokeWidth="1.3" />
      ))}
      {beams.map(([v, a, ay, b, by]) => {
        const x1 = px(v, a);
        const x2 = px(v, b);
        const y1 = py(v, ay);
        const y2 = py(v, by);
        return <polygon key={`${v.ox}-${a}`} points={`${x1},${y1 - 2.2} ${x2},${y2 - 2.2} ${x2},${y2 + 2.2} ${x1},${y1 + 2.2}`} fill="#000" />;
      })}
      {ties.map(([v, a, ay, b, by, peak]) => {
        const x1 = px(v, a);
        const x2 = px(v, b);
        const y1 = py(v, ay);
        const y2 = py(v, by);
        const cy = 2 * py(v, peak) - (y1 + y2) / 2;
        return <path key={`${v.ox}-${a}-${ay}`} d={`M${x1} ${y1} Q${(x1 + x2) / 2} ${cy} ${x2} ${y2}`} fill="none" stroke="#111" strokeWidth="1.4" />;
      })}
      {noteSets.map(({ v, notes }) => notes.map((n, i) => <NoteGlyph key={`${v.ox}-${i}`} v={v} note={n} />))}

      {/* sharps */}
      {[[top1, 1434, 600], [top2, 1497, 597]].map(([v, x, y]) => {
        const cx = px(v as View, x as number);
        const cy = py(v as View, y as number);
        return (
          <g key={cx} stroke="#000">
            <line x1={cx - 2} x2={cx - 2} y1={cy - 11} y2={cy + 11} strokeWidth="1.1" />
            <line x1={cx + 2} x2={cx + 2} y1={cy - 11} y2={cy + 11} strokeWidth="1.1" />
            <line x1={cx - 4.5} x2={cx + 4.5} y1={cy - 3} y2={cy - 5.5} strokeWidth="2.4" />
            <line x1={cx - 4.5} x2={cx + 4.5} y1={cy + 5.5} y2={cy + 3} strokeWidth="2.4" />
          </g>
        );
      })}
      {/* flat in front of the tied note in bar 56 */}
      <path d="M795 423 V451 C801 447 805 442 803 438 C801 435 797 437 795 440" fill="none" stroke="#000" strokeWidth="1.3" />

      {lyrics.map(({ v, base, words }) =>
        words.map(([x, w]) => (
          <text
            key={`${v.ox}-${base}-${x}`}
            x={px(v, x)}
            y={base}
            textAnchor="middle"
            fontSize="23"
            fill="#111"
            fontFamily="'Liberation Serif', serif"
          >
            {w}
          </text>
        )),
      )}

      {/* resize grip */}
      <line x1="2757" y1="640" x2="2772" y2="627" stroke="#777" strokeWidth="1.2" />
      <line x1="2765" y1="640" x2="2772" y2="634" stroke="#777" strokeWidth="1.2" />
    </svg>
  );
}

export default function App() {
  return (
    <div className="w-[2784px] h-[1468px] overflow-hidden bg-[#1c3253] font-['Liberation_Sans',Arial,sans-serif]">
      <header className="flex justify-between h-[54px] pl-[17px] pr-[7px]">
        <div className="flex items-start pt-[10px] text-[39px] leading-[44px] text-[#a9c8e8]">
          <h1>Spem Player</h1>
          <span className="ml-[9px] mt-[7px] flex h-[26px] w-[25px] items-center justify-center rounded-full bg-[#a9c8e8] text-[25px] font-bold italic leading-none text-[#1c3253] font-['Liberation_Serif',serif]">
            i
          </span>
        </div>
        <div className="flex items-start gap-[23px] pt-[5px] text-[#a9c8e8]">
          <svg viewBox="0 0 33 40" className="h-[40px] w-[33px]" fill="currentColor">
            <ellipse cx="7" cy="34" rx="7" ry="6" transform="rotate(-20 7 34)" />
            <ellipse cx="26.5" cy="29" rx="6.5" ry="5.5" transform="rotate(-20 26.5 29)" />
            <rect x="12" y="10" width="2.4" height="24" />
            <rect x="30.6" y="3" width="2.4" height="26" />
            <polygon points="12,8 33,1 33,7 12,14" />
          </svg>
          <BsMoon size={37} className="mt-[2px]" />
        </div>
      </header>

      <div className="ml-[4px] w-[2778px] h-[596px] overflow-hidden rounded-[20px] border-8 border-[#e3cb52] bg-[#f5f5f5]">
        <Score />
      </div>

      <PianoRoll />

      <div className="flex items-start pl-[14px] pt-[8px]">
        <button className="mt-[4px] flex h-[104px] w-[88px] items-center justify-center rounded-[50%] border-[5px] border-[#5b8bc9] bg-white">
          <svg viewBox="0 0 50 56" className="ml-[3px] h-[56px] w-[50px]">
            <polygon points="0,0 50,28 0,56" fill="#222" />
          </svg>
        </button>

        <label className="ml-[20px] flex flex-col text-[28px] leading-[32px] text-[#e6e6e6]">
          Choir
          <span className="relative block">
            <select
              defaultValue="4"
              className="block h-[56px] w-[90px] appearance-none rounded-[16px] border-[4px] border-[#5b8bc9] bg-white pl-[12px] pt-[2px] text-[33px] text-black"
            >
              <option>4</option>
            </select>
            <ChevronDown size={32} strokeWidth={1.2} className="pointer-events-none absolute right-[2px] top-[12px] text-black" />
          </span>
        </label>

        <label className="ml-[21px] flex flex-col text-[28px] leading-[32px] text-[#e6e6e6]">
          Part
          <span className="relative block">
            <select
              defaultValue="Baritone"
              className="block h-[56px] w-[182px] appearance-none rounded-[16px] border-[4px] border-[#5b8bc9] bg-white pl-[12px] pt-[2px] text-[33px] text-black"
            >
              <option>Baritone</option>
            </select>
            <ChevronDown size={32} strokeWidth={1.2} className="pointer-events-none absolute right-[3px] top-[12px] text-black" />
          </span>
        </label>

        <label className="ml-[21px] flex flex-col text-[28px] leading-[32px] text-[#e6e6e6]">
          Bar
          <input
            defaultValue="56"
            className="block h-[56px] w-[110px] rounded-[16px] border-[4px] border-[#5b8bc9] bg-white pl-[4px] pt-[2px] text-[33px] text-black outline-none"
          />
        </label>
      </div>
    </div>
  );
}
